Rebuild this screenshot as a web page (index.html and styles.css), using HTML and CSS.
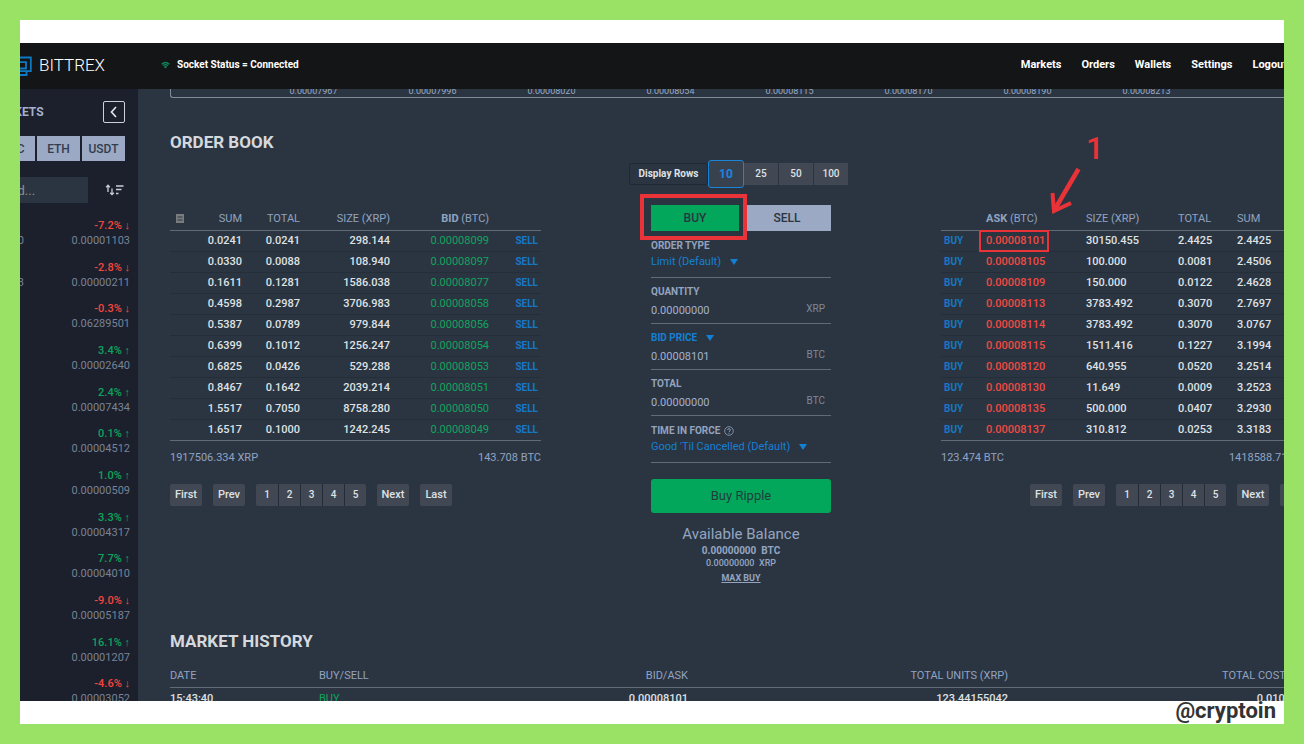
FILE: index.html
```html
<!DOCTYPE html>
<html lang="en">
<head>
<meta charset="utf-8">
<title>Bittrex – XRP order book</title>
<link rel="stylesheet" href="styles.css">
</head>
<body>
<div class="frame">
  <div class="app">
    <header class="topbar">
      <a class="brand" href="#">
        <svg class="brand-mark" viewBox="0 0 13 24" aria-hidden="true"><path d="M0 4.500H10.800V18.200H0M0 9.200H6V15.500H0M6.500 18.200V22H0" fill="none" stroke="#0f7ac4" stroke-width="1.800"/></svg>
        <span>BITTREX</span>
      </a>
      <div class="socket">
        <svg class="wifi" viewBox="0 0 10 8" aria-hidden="true"><path d="M.8 3.200Q5 -.8 9.200 3.200M2.400 4.800Q5 2.400 7.600 4.800" fill="none" stroke="#0b8a55" stroke-width="1.500"/><circle cx="5" cy="6.200" r="1.300" fill="#0b8a55"/></svg>
        <span>Socket Status = Connected</span>
      </div>
      <nav class="nav">
        <a href="#">Markets</a><a href="#">Orders</a><a href="#">Wallets</a><a href="#">Settings</a><a href="#">Logout</a>
      </nav>
    </header>
    <div class="body">
      <aside class="sidebar">
        <div class="side-inner">
          <div class="side-head">
            <h2>MARKETS</h2>
            <button class="collapse" type="button" aria-label="Collapse markets"><svg viewBox="0 0 20 20"><path d="M12 5L7.500 10L12 15" fill="none" stroke="#e6e9ee" stroke-width="1.6"/></svg></button>
          </div>
          <div class="side-tabs"><button type="button">BTC</button><button type="button">ETH</button><button type="button">USDT</button></div>
          <div class="side-search">
            <input type="text" placeholder="Find..." aria-label="Find a market">
            <button class="sort" type="button" aria-label="Sort"><svg viewBox="0 0 20 12"><path d="M3 8V1.500M1.200 3.200L3 1.300L4.800 3.200M7 4.500V10.500M5.200 8.800L7 10.600L8.800 8.800M11 2H18.500M11 5.500H16.500M11 9.500H13.500" fill="none" stroke="#c9ced6" stroke-width="1.300"/></svg></button>
          </div>
          <ul class="markets" id="markets"></ul>
        </div>
      </aside>
      <main class="main">
        <div class="axis"><span>0.00007967</span><span>0.00007996</span><span>0.00008020</span><span>0.00008054</span><span>0.00008115</span><span>0.00008170</span><span>0.00008190</span><span>0.00008213</span></div>
        <h1 class="title">ORDER BOOK</h1>
        <div class="book">
          <section class="side-book">
            <table class="orders bids">
              <colgroup><col class="w24"><col class="w48"><col class="w58"><col class="w90"><col class="w99"><col></colgroup>
              <thead><tr><th><svg class="note" viewBox="0 0 8 9" aria-label="Notes"><path d="M0 0H8V9H0Z" fill="#7a7d80"/><path d="M1.500 3H6.500M1.500 6H6.500" stroke="#2b3541"/></svg></th><th>SUM</th><th>TOTAL</th><th>SIZE (XRP)</th><th><b>BID</b> (BTC)</th><th></th></tr></thead>
              <tbody id="bids"></tbody>
            </table>
            <div class="totals"><span>1917506.334 XRP</span><span>143.708 BTC</span></div>
            <div class="pager"><button type="button">First</button><button type="button">Prev</button><div class="pages"><button type="button">1</button><button type="button">2</button><button type="button">3</button><button type="button">4</button><button type="button">5</button></div><button type="button">Next</button><button type="button">Last</button></div>
          </section>

          <section class="ticket">
            <div class="rows-picker"><span>Display Rows</span><button class="on" type="button">10</button><button type="button">25</button><button type="button">50</button><button type="button">100</button></div>
            <div class="buy-sell">
              <div class="marked"><button class="buy" type="button">BUY</button><i class="mark mark-buy"></i></div>
              <button class="sell" type="button">SELL</button>
            </div>
            <div class="field pick">
              <label for="otype">ORDER TYPE</label>
              <div class="value"><select id="otype"><option>Limit (Default)</option></select><svg class="caret" viewBox="0 0 8 6" aria-hidden="true"><path d="M0 0H8L4 6Z"/></svg></div>
            </div>
            <div class="field">
              <label for="qty">QUANTITY</label>
              <div class="value"><input id="qty" type="text" value="0.00000000"><span class="unit">XRP</span></div>
            </div>
            <div class="field">
              <div class="price-kind"><select aria-label="Price source"><option>BID PRICE</option></select><svg class="caret" viewBox="0 0 8 6" aria-hidden="true"><path d="M0 0H8L4 6Z"/></svg></div>
              <div class="value"><input type="text" value="0.00008101" aria-label="Bid price"><span class="unit">BTC</span></div>
            </div>
            <div class="field">
              <label for="total">TOTAL</label>
              <div class="value"><input id="total" type="text" value="0.00000000"><span class="unit">BTC</span></div>
            </div>
            <div class="field pick">
              <label for="tif">TIME IN FORCE <svg class="help" viewBox="0 0 10 10" aria-hidden="true"><circle cx="5" cy="5" r="4.300" fill="none" stroke="currentColor" stroke-width=".8"/><path d="M3.600 4C3.600 2.200 6.400 2.200 6.400 4C6.400 4.900 5 5 5 6.100M5 6.900V7.800" fill="none" stroke="currentColor" stroke-width=".9"/></svg></label>
              <div class="value"><select id="tif"><option>Good 'Til Cancelled (Default)</option></select><svg class="caret" viewBox="0 0 8 6" aria-hidden="true"><path d="M0 0H8L4 6Z"/></svg></div>
            </div>
            <button class="submit" type="button">Buy Ripple</button>
            <div class="balance">
              <h3>Available Balance</h3>
              <p class="main-bal">0.00000000&nbsp; BTC</p>
              <p class="alt-bal">0.00000000&nbsp; XRP</p>
              <a href="#">MAX BUY</a>
            </div>
          </section>

          <section class="side-book">
            <table class="orders asks">
              <colgroup><col class="w45"><col class="w100"><col class="w92"><col class="w59"><col></colgroup>
              <thead><tr><th></th><th><b>ASK</b> (BTC)</th><th>SIZE (XRP)</th><th>TOTAL</th><th>SUM</th></tr></thead>
              <tbody id="asks"></tbody>
            </table>
            <div class="totals wide"><span>123.474 BTC</span><span>1418588.711 XRP</span></div>
            <div class="pager end"><button type="button">First</button><button type="button">Prev</button><div class="pages"><button type="button">1</button><button type="button">2</button><button type="button">3</button><button type="button">4</button><button type="button">5</button></div><button type="button">Next</button><button type="button">Last</button></div>
            <span class="step">1</span>
            <svg class="arrow" viewBox="0 0 34 52" aria-hidden="true"><path d="M29.500 3L6 43" stroke-width="4.500"/><path d="M3.500 27L5 45L22 37" stroke-width="4"/></svg>
          </section>
        </div>
        <h1 class="title history-title">MARKET HISTORY</h1>
        <table class="history">
          <colgroup><col class="w149"><col class="w149"><col class="w220"><col class="w320"><col></colgroup>
          <thead><tr><th>DATE</th><th>BUY/SELL</th><th class="r">BID/ASK</th><th class="r">TOTAL UNITS (XRP)</th><th class="r">TOTAL COST (BTC)</th></tr></thead>
          <tbody><tr><td>15:43:40</td><td class="up">BUY</td><td class="r">0.00008101</td><td class="r">123.44155042</td><td class="r">0.01000000</td></tr></tbody>
        </table>
      </main>
    </div>
  </div>
  <div class="credit">@cryptoin</div>
</div>
<script src="app.js"></script>
</body>
</html>
```

FILE: styles.css
```css
* { box-sizing: border-box; }
body {
  margin: 0;
  background: #99e265;
  font: 11px/16px Roboto, "Liberation Sans", sans-serif;
  color: #dfe2e5;
}
button, input, select { font: inherit; color: inherit; border: 0; margin: 0; padding: 0; background: none; }
a { color: inherit; text-decoration: none; }
h1, h2, h3, p, ul { margin: 0; padding: 0; }
svg { display: block; }

.frame {
  position: relative;
  display: flex;
  height: calc(100vh - 40px);
  margin: 20px;
  padding: 23px 0;
  background: #fff;
}
.app { flex: 1; min-width: 0; display: flex; flex-direction: column; overflow: hidden; background: #2b3541; }

.topbar { flex: none; display: flex; align-items: center; height: 46px; padding-bottom: 3px; background: #141517; color: #fff; font-weight: 700; }
.brand { display: flex; align-items: center; gap: 6px; width: 141px; font-size: 17px; font-weight: 300; }
.brand-mark { width: 13px; height: 24px; }
.socket { display: flex; align-items: center; gap: 7px; font-size: 10px; }
.wifi { width: 9px; height: 8px; }
.nav { display: flex; gap: 20px; margin-left: auto; margin-right: -3px; }

.body { flex: 1; min-height: 0; display: flex; }
.sidebar { flex: none; width: 118px; overflow: hidden; background: #1b202c; }
.side-inner { margin-left: -32px; }
.side-head { display: flex; justify-content: space-between; align-items: center; padding: 12px 13px 13px 0; }
.side-head h2 { font-size: 12px; line-height: 16px; font-weight: 700; color: #a3b1cc; }
.collapse { width: 22px; height: 22px; border: 1px solid #ccd1d9; border-radius: 2px; }
.side-tabs { display: flex; justify-content: flex-end; gap: 2px; padding-right: 13px; }
.side-tabs button { width: 43px; height: 25px; background: #9ba9c4; color: #323d4d; font-size: 12px; font-weight: 500; }
.side-search { display: flex; justify-content: space-between; align-items: center; padding: 16px 13px 15px 0; }
.side-search input { width: 100px; height: 26px; padding-left: 12px; background: #2b3541; font-size: 13px; }
.side-search input::placeholder { color: #8b8e92; }
.sort { width: 20px; height: 12px; }
.markets { list-style: none; padding-right: 8px; }
.markets li { display: grid; grid-template-columns: 36px 1fr; align-content: start; height: 42px; text-align: right; line-height: 15px; color: #788395; }
.markets li:nth-child(3n+2) { height: 41px; }
.markets .change { grid-column: 1 / -1; font-weight: 500; }
.up { color: #0ea35c; }
.down { color: #f4463f; }

.main { flex: 1; min-width: 0; overflow: hidden; padding-left: 32px; }
.axis { display: grid; grid-template-columns: repeat(8, 119px); align-content: end; height: 9px; padding-left: 83px; overflow: hidden; border: 1px solid #808a99; border-width: 0 0 1px 1px; border-radius: 0 0 0 3px; text-align: center; line-height: 12px; font-size: 9px; color: #9aa9c4; }
.title { margin-top: 34px; font-size: 17px; line-height: 20px; font-weight: 700; color: #d5d9de; }
.book { display: grid; grid-template-columns: 1fr 180px 1fr; gap: 110px; margin: 8px -28px 0 0; }

.side-book { position: relative; min-width: 0; padding-top: 47px; }
.orders, .history { width: 100%; table-layout: fixed; border-spacing: 0; }
.w24 { width: 24px; } .w48 { width: 48px; } .w58 { width: 58px; } .w90 { width: 90px; } .w99 { width: 99px; }
.w45 { width: 45px; } .w100 { width: 100px; } .w92 { width: 92px; } .w59 { width: 59px; }
.w149 { width: 149px; } .w220 { width: 220px; } .w320 { width: 320px; }
th, td { padding: 0; white-space: nowrap; text-align: left; }
th { height: 24px; border-bottom: 1px solid #616b78; font-weight: 400; color: #91a3c2; }
th b { font-weight: 700; }
td { height: 21px; font-weight: 500; line-height: 16px; }
.orders td { border-bottom: 1px solid #242e39; }
.orders tr:last-child td { border-bottom-color: #616b78; }
.bids th, .bids td { text-align: right; }
.bids th:first-child { padding-left: 6px; }
.note { width: 8px; height: 9px; }
.bids td:last-child { padding-right: 3px; }
.asks td:first-child { padding-left: 3px; }
.orders button { font-size: 10px; line-height: 16px; font-weight: 700; color: #1678c8; }
.orders .price { font-weight: 400; }
.bids .price { color: #12a35f; }
.asks .price { position: relative; font-weight: 500; color: #f04a43; }

.totals { display: flex; justify-content: space-between; margin-top: 9px; color: #91a3c2; }
.totals.wide { margin-right: -5px; }
.pager { display: flex; gap: 11px; margin-top: 18px; }
.pager.end { justify-content: flex-end; }
.pager button { width: 32px; height: 22px; border-radius: 2px; background: #414853; font-weight: 500; }
.pages { display: flex; border-radius: 2px; overflow: hidden; }
.pager .pages button { width: 22px; font-size: 10px; border-radius: 0; }
.pager .pages button + button { border-left: 1px solid #242c37; }

.ticket { display: flex; flex-direction: column; }
.rows-picker { display: flex; align-self: center; align-items: center; margin: 0 -18px 0 -22px; font-weight: 500; }
.rows-picker span { height: 22px; width: 79px; line-height: 20px; text-align: center; font-size: 10px; font-weight: 700; border: 1px solid #1f2834; border-radius: 2px; }
.rows-picker button { width: 34px; height: 22px; margin-right: 1px; background: #414853; font-size: 10px; }
.rows-picker .on { width: 36px; height: 28px; margin: 0; border: 1px solid #1a85d6; border-radius: 3px; background: #38424f; color: #1a85e6; font-size: 12px; font-weight: 700; }
.buy-sell { display: grid; grid-template-columns: 1fr 1fr; gap: 4px; margin-top: 17px; }
.buy-sell button { width: 100%; height: 26px; font-size: 12px; font-weight: 500; color: #2b3541; }
.buy-sell .buy { background: #02a75c; }
.buy-sell .sell { background: #9ba9c4; }
.marked { position: relative; display: flex; }
.mark { position: absolute; border: 2px solid #e93338; }
.mark-buy { inset: -11px -8px -9px -11px; border-width: 4px; }
.mark-ask { inset: -1px 37px -1px -7px; }

.field { padding: 8px 0 4px; border-bottom: 1px solid #616b78; color: #a3b1cc; }
.field label { display: flex; align-items: center; gap: 4px; font-size: 10px; line-height: 12px; font-weight: 700; color: #94a3be; }
.help { width: 10px; height: 10px; }
.field .value { display: flex; align-items: center; height: 18px; margin-top: 3px; }
.field input { flex: 1; min-width: 0; height: 18px; }
.unit { padding-right: 6px; line-height: 14px; margin-bottom: 3px; font-size: 10px; color: #7d899c; }
.pick { padding: 9px 0 6px; }
.field.pick .value { margin-top: 1px; }
select { appearance: none; color: #1480d3; }
.price-kind { display: flex; align-items: center; height: 12px; font-size: 10px; font-weight: 700; line-height: 12px; }
.caret { width: 8px; height: 6px; margin-left: 8px; fill: #1480d3; }
.submit { height: 34px; margin-top: 16px; border-radius: 3px; background: #02a75c; color: #203d3c; font-size: 13px; }
.balance { margin-top: 11px; text-align: center; color: #94a5c2; }
.balance h3 { font-size: 15px; line-height: 20px; font-weight: 400; }
.main-bal { font-size: 10px; line-height: 13px; font-weight: 700; }
.alt-bal { font-size: 9px; line-height: 13px; font-weight: 500; }
.balance a { font-size: 9px; line-height: 16px; font-weight: 700; text-decoration: underline; }

.step { position: absolute; left: 145px; top: -27px; font-size: 31px; line-height: 32px; font-weight: 500; color: #e93338; }
.arrow { position: absolute; left: 108px; top: 6px; width: 34px; height: 52px; fill: none; stroke: #e93338; }

.history-title { margin-top: 45px; }
.history { width: calc(100% + 32px); margin-top: 13px; }
.history .r { text-align: right; }
.history .up { font-weight: 400; }
.credit { position: absolute; right: 8px; bottom: 2px; font-size: 22px; line-height: 22px; font-weight: 700; color: #333; }
```

FILE: app.js
```js
const bids = [
  ["0.0241", "0.0241", "298.144", "0.00008099"],
  ["0.0330", "0.0088", "108.940", "0.00008097"],
  ["0.1611", "0.1281", "1586.038", "0.00008077"],
  ["0.4598", "0.2987", "3706.983", "0.00008058"],
  ["0.5387", "0.0789", "979.844", "0.00008056"],
  ["0.6399", "0.1012", "1256.247", "0.00008054"],
  ["0.6825", "0.0426", "529.288", "0.00008053"],
  ["0.8467", "0.1642", "2039.214", "0.00008051"],
  ["1.5517", "0.7050", "8758.280", "0.00008050"],
  ["1.6517", "0.1000", "1242.245", "0.00008049"]
];
const asks = [
  ["0.00008101", "30150.455", "2.4425", "2.4425"],
  ["0.00008105", "100.000", "0.0081", "2.4506"],
  ["0.00008109", "150.000", "0.0122", "2.4628"],
  ["0.00008113", "3783.492", "0.3070", "2.7697"],
  ["0.00008114", "3783.492", "0.3070", "3.0767"],
  ["0.00008115", "1511.416", "0.1227", "3.1994"],
  ["0.00008120", "640.955", "0.0520", "3.2514"],
  ["0.00008130", "11.649", "0.0009", "3.2523"],
  ["0.00008135", "500.000", "0.0407", "3.2930"],
  ["0.00008137", "310.812", "0.0253", "3.3183"]
];
const markets = [
  ["-7.2%", "0.00001103", "0"], ["-2.8%", "0.00000211", "3"], ["-0.3%", "0.06289501", ""],
  ["3.4%", "0.00002640", ""], ["2.4%", "0.00007434", ""], ["0.1%", "0.00004512", ""],
  ["1.0%", "0.00000509", ""], ["3.3%", "0.00004317", ""], ["7.7%", "0.00004010", ""],
  ["-9.0%", "0.00005187", ""], ["16.1%", "0.00001207", ""], ["-4.6%", "0.00003052", ""]
];

document.getElementById("bids").innerHTML = bids.map(([sum, total, size, price]) =>
  `<tr><td></td><td>${sum}</td><td>${total}</td><td>${size}</td><td class="price">${price}</td><td><button type="button">SELL</button></td></tr>`
).join("");

document.getElementById("asks").innerHTML = asks.map(([price, size, total, sum], i) =>
  `<tr><td><button type="button">BUY</button></td><td class="price">${price}${i === 0 ? '<i class="mark mark-ask"></i>' : ""}</td><td>${size}</td><td>${total}</td><td>${sum}</td></tr>`
).join("");

document.getElementById("markets").innerHTML = markets.map(([change, price, volume]) => {
  const falling = change.startsWith("-");
  return `<li><span class="change ${falling ? "down" : "up"}">${change} ${falling ? "↓" : "↑"}</span><span>${volume}</span><span>${price}</span></li>`;
}).join("");
```
